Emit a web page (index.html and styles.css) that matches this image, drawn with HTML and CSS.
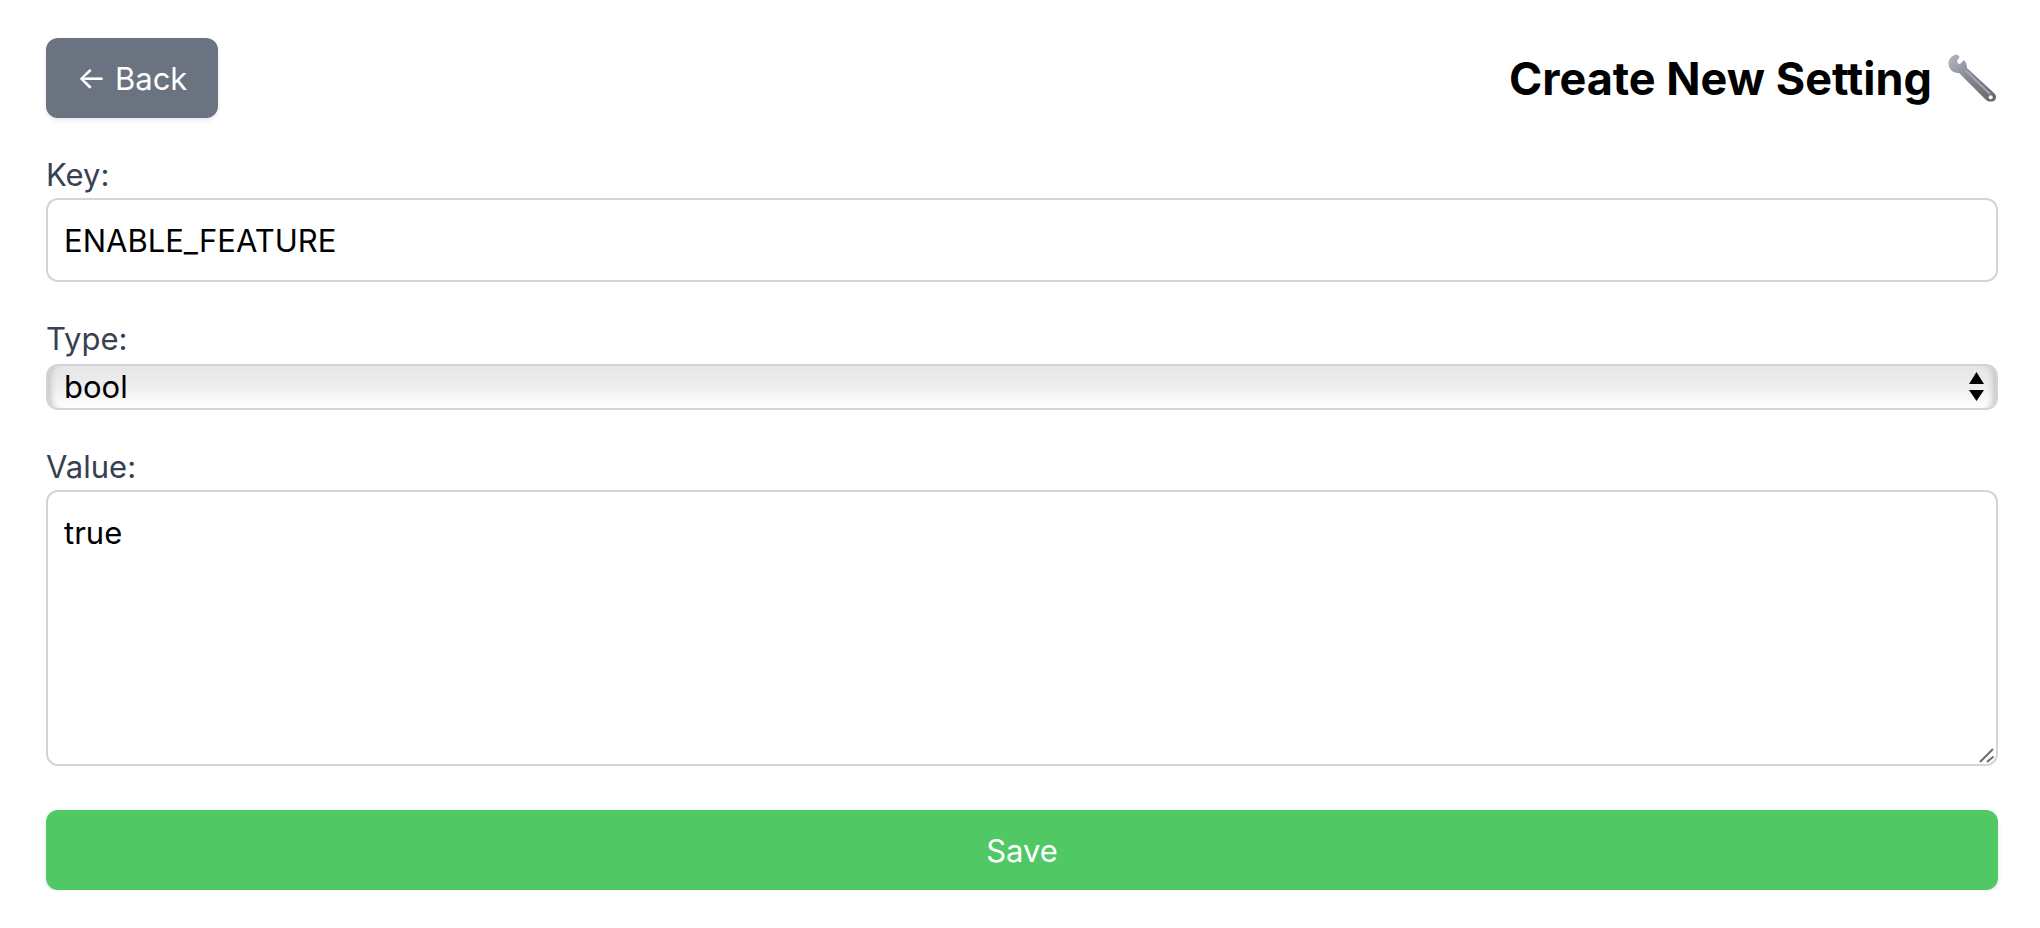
FILE: index.html
```html
<!DOCTYPE html>
<html lang="en">
<head>
  <meta charset="UTF-8">
  <title>Create New Setting</title>
  <link rel="stylesheet" href="styles.css">
</head>
<body>
<div class="page">
  <div class="top-bar">
    <a class="back-btn" href="#">← Back</a>
    <h1 class="page-title">Create New Setting
      <!-- wrench emoji -->
      <svg class="wrench" viewBox="0 0 48 48" width="48" height="48" aria-hidden="true">
        <defs>
          <linearGradient id="steel" x1="0" y1="0" x2="1" y2="1">
            <stop offset="0" stop-color="#b4b8c0"/>
            <stop offset="0.5" stop-color="#80838e"/>
            <stop offset="1" stop-color="#6b6169"/>
          </linearGradient>
        </defs>
        <path d="M8 0.5 C3 2 0 6 0.5 10 C1 15 5 19.5 11 19 L37 45 C39 48 45 48.5 47 46 C49 43 48 41 46 39 L19 14 C19 11 18 8 16 6 L12 10 C10 10 9 8.5 9 7 L11.5 3 C11 1.5 9.5 0.3 8 0.5 Z" fill="url(#steel)"/>
        <path d="M17 16 L42 40" stroke="#a2a5ae" stroke-width="2" fill="none"/>
        <circle cx="42.7" cy="43.3" r="2" fill="#fff"/>
      </svg>
    </h1>
  </div>

  <form class="setting-form">
    <div class="field">
      <label for="key">Key:</label>
      <input id="key" type="text" value="ENABLE_FEATURE">
    </div>
    <div class="field">
      <label for="type">Type:</label>
      <div class="select-wrap">
        <select id="type">
          <option>bool</option>
          <option>int</option>
          <option>string</option>
        </select>
        <svg class="select-arrows" viewBox="0 0 15 29" width="15" height="29" aria-hidden="true">
          <path d="M7.5 0 L15 12 H0 Z M0 18 H15 L7.5 29 Z" fill="#000"/>
        </svg>
      </div>
    </div>
    <div class="field field-last">
      <label for="value">Value:</label>
      <div class="textarea-wrap">
        <textarea id="value">true</textarea>
        <svg class="grip" viewBox="0 0 16 16" width="16" height="16" aria-hidden="true">
          <path d="M1 15 L14 2 M8 15 L14.5 9.5" stroke="#6e6e6e" stroke-width="2" fill="none"/>
        </svg>
      </div>
    </div>
    <button class="save-btn" type="button">Save</button>
  </form>
</div>
</body>
</html>
```

FILE: styles.css
```css
* {
  box-sizing: border-box;
}
body {
  margin: 0;
  background: #fff;
  color: #000;
  font-family: Inter, "Liberation Sans", sans-serif;
}
.page {
  padding: 38px 42px 0 46px;
}
.top-bar {
  display: flex;
  justify-content: space-between;
  align-items: center;
  margin-bottom: 38px;
}
.back-btn {
  display: flex;
  align-items: center;
  justify-content: center;
  width: 172px;
  height: 80px;
  border-radius: 12px;
  background: #6b7280;
  color: #fff;
  font-size: 31px;
  text-decoration: none;
  box-shadow: 0 2px 4px rgba(0, 0, 0, 0.1);
}
.page-title {
  display: flex;
  align-items: center;
  gap: 16px;
  margin: 0;
  padding-right: 2px;
  font-size: 45px;
  font-weight: 700;
}
.wrench {
  flex: none;
}
.field {
  margin-bottom: 38px;
}
.field-last {
  margin-bottom: 44px;
}
.field label {
  display: block;
  height: 42px;
  color: #374151;
  font-size: 31px;
  line-height: 37px;
}
.field input,
.field select,
.field textarea {
  display: block;
  width: 100%;
  border: 2px solid #d1d5db;
  border-radius: 12px;
  color: #000;
  font-family: inherit;
  font-size: 31px;
  outline: none;
}
.field input {
  height: 84px;
  padding: 0 16px;
}
.select-wrap {
  position: relative;
  margin-top: 2px;
}
.field select {
  height: 46px;
  padding: 0 16px 2px;
  appearance: none;
  background: linear-gradient(#e6e6e6, #eeeeee 50%, #fff);
  box-shadow: inset 9px 0 6px -6px #c4c4c4, inset -9px 0 6px -6px #c4c4c4;
}
.select-arrows {
  position: absolute;
  top: 8px;
  right: 14px;
  pointer-events: none;
}
.textarea-wrap {
  position: relative;
}
.field textarea {
  height: 276px;
  padding: 22px 16px;
  resize: none;
}
.grip {
  position: absolute;
  right: 3px;
  bottom: 3px;
  pointer-events: none;
}
.save-btn {
  display: block;
  width: 100%;
  height: 80px;
  border: none;
  border-radius: 12px;
  background: #50c864;
  color: #fff;
  font-family: inherit;
  font-size: 31px;
  box-shadow: 0 2px 4px rgba(0, 0, 0, 0.1);
}
```
